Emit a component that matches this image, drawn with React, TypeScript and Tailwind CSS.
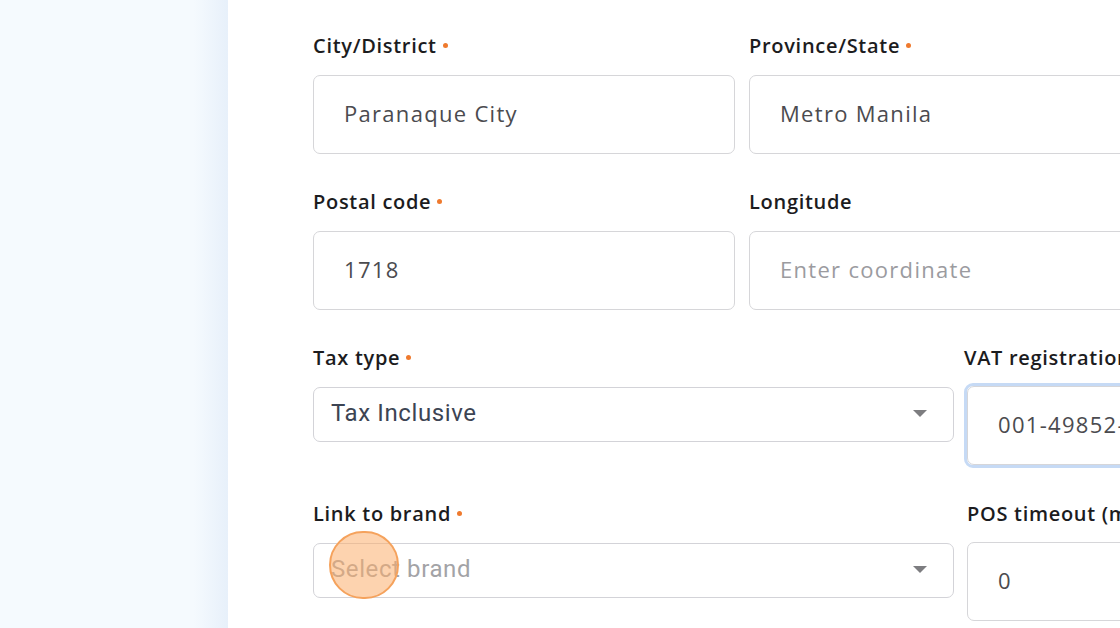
import React from "react";

const Dot = () => <span className="ml-[6px] inline-block h-[5px] w-[5px] rounded-full bg-[#ef7a2e] align-middle relative top-[-1px]" />;

function Label({ text, req }: { text: string; req?: boolean }) {
  return (
    <div className="h-[30px] flex items-center whitespace-nowrap text-[20px] font-semibold text-[#1c1c1e] tracking-[0.7px]" style={{ fontFamily: '"Open Sans", sans-serif' }}>
      {text}
      {req && <Dot />}
    </div>
  );
}

function TextBox({ value, placeholder, w, cls = "" }: { value?: string; placeholder?: string; w: string; cls?: string }) {
  return (
    <div className={`${w} h-[79px] shrink-0 rounded-[7px] border border-[#d6d6d9] bg-white flex items-center pl-[30px] pb-[3px] text-[22px] tracking-[1.3px] whitespace-nowrap overflow-hidden ${cls}`} style={{ fontFamily: '"Open Sans", sans-serif' }}>
      {value ? <span className="text-[#4b4b4f]">{value}</span> : <span className="text-[#9b9b9f]">{placeholder}</span>}
    </div>
  );
}

function Caret() {
  return (
    <svg width="16" height="9" viewBox="0 0 16 9" className="shrink-0">
      <path d="M1 1 L15 1 L8 8 Z" fill="#7d7d80" />
    </svg>
  );
}

function Select({ value, placeholder }: { value?: string; placeholder?: string }) {
  return (
    <div className="w-[641px] h-[55px] shrink-0 rounded-[7px] border border-[#d3d3d8] bg-white flex items-center justify-between pl-[17px] pr-[25px] pb-[3px] text-[24px] tracking-[0.6px]" style={{ fontFamily: 'Roboto, sans-serif' }}>
      {value ? <span className="text-[#3c4453]">{value}</span> : <span className="text-[#a3a3a6]">{placeholder}</span>}
      <Caret />
    </div>
  );
}

export default function App() {
  return (
    <div className="flex h-[628px] w-[1120px] overflow-hidden bg-white">
      <div className="w-[228px] shrink-0 h-full bg-[linear-gradient(to_right,#f5fafe_0%,#f5fafe_85%,#e7f0fa_100%)]" />
      <div className="flex-1 pl-[85px] pt-[31px] overflow-hidden">
        {/* Row 1 */}
        <div className="flex gap-[14px]">
          <div className="flex flex-col gap-[14px]">
            <Label text="City/District" req />
            <TextBox value="Paranaque City" w="w-[422px]" />
          </div>
          <div className="flex flex-col gap-[14px]">
            <Label text="Province/State" req />
            <TextBox value="Metro Manila" w="w-[422px]" />
          </div>
        </div>
        {/* Row 2 */}
        <div className="flex gap-[14px] mt-[33px]">
          <div className="flex flex-col gap-[14px]">
            <Label text="Postal code" req />
            <TextBox value="1718" w="w-[422px]" />
          </div>
          <div className="flex flex-col gap-[14px]">
            <Label text="Longitude" />
            <TextBox placeholder="Enter coordinate" w="w-[422px]" />
          </div>
        </div>
        {/* Row 3 */}
        <div className="flex gap-[10px] mt-[33px]">
          <div className="flex flex-col gap-[14px]">
            <Label text="Tax type" req />
            <Select value="Tax Inclusive" />
          </div>
          <div className="flex flex-col gap-[10px]">
            <Label text="VAT registration number" req />
            <div className="rounded-[9px] border-[3px] border-[#c6daf5] w-[300px]">
              <TextBox value="001-49852-000" w="w-full" cls="h-[78px] border-[#cfd8e6] pl-[30px]" />
            </div>
          </div>
        </div>
        {/* Row 4 */}
        <div className="flex gap-[13px] mt-[31px]">
          <div className="flex flex-col gap-[14px]">
            <Label text="Link to brand" req />
            <div className="relative">
              <Select placeholder="Select brand" />
              <div className="absolute left-[16px] top-[-12px] h-[68px] w-[70px] rounded-full bg-[#fbae6e]/55 border-2 border-[#f5a25c]" />
            </div>
          </div>
          <div className="flex flex-col gap-[13px]">
            <Label text="POS timeout (minutes)" />
            <TextBox value="0" w="w-[300px]" cls="h-[79px]" />
          </div>
        </div>
      </div>
    </div>
  );
}
